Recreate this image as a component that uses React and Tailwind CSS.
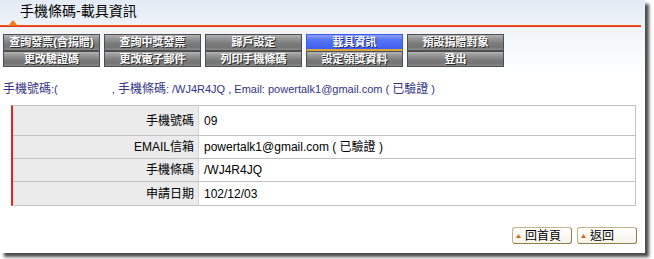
import React from 'react';

const FONT = { fontFamily: '"Liberation Sans", "Noto Sans CJK TC", sans-serif' };

// Top menu, two rows of five
const row1 = ['查詢發票(含捐贈)', '查詢中獎發票', '歸戶設定', '載具資訊', '預設捐贈對象'];
const row2 = ['更改驗證碼', '更改電子郵件', '列印手機條碼', '設定領獎資料', '登出'];

function MenuButton({ label, active, tall }) {
  if (active) {
    return (
      <div
        className={`${tall ? 'h-[17px]' : 'h-[16px]'} flex items-center justify-center border border-[#3d5ce8] border-b-[2px] border-b-[#d9a441] bg-[linear-gradient(to_bottom,#8ea2fb_0%,#5674f5_35%,#3f5ff0_100%)] text-white text-[11px] font-bold leading-none [text-shadow:1px_1px_0_#1a2a8a]`}
      >
        {label}
      </div>
    );
  }
  return (
    <div
      className={`${tall ? 'h-[17px]' : 'h-[16px]'} flex items-center justify-center border border-[#4e4e4e] bg-[linear-gradient(to_bottom,#b4b4b4_0%,#9a9a9a_20%,#7c7c7c_55%,#737373_80%,#8c8c8c_100%)] text-white text-[11px] font-bold leading-none [text-shadow:1px_1px_0_#2a2a2a]`}
    >
      {label}
    </div>
  );
}

function InfoRow({ label, value, tall }) {
  return (
    <div className={`flex ${tall ? 'h-[30px]' : 'h-[23px]'} border-b border-[#c2c2c2] last:border-b-0`}>
      <div className="w-[186px] bg-[#ebebeb] border-r border-[#d4d4d4] flex items-center justify-end pr-[4px] text-black">
        {label}
      </div>
      <div className="flex-1 flex items-center pl-[5px] text-black">{value}</div>
    </div>
  );
}

function SmallButton({ label }) {
  return (
    <div className="w-[60px] h-[17px] rounded-[3px] border border-[#c2b48a] border-r-[#8f7f4f] border-b-[#8f7f4f] bg-[linear-gradient(to_bottom,#ffffff,#f6f3ea)] flex items-center pl-[3px] gap-[4px] text-[12px] leading-none text-black">
      <svg width="5" height="4" viewBox="0 0 5 4">
        <polygon points="2.5,0 5,4 0,4" fill="#d2691e" />
      </svg>
      <span>{label}</span>
    </div>
  );
}

export default function App() {
  return (
    <div className="w-[654px] h-[259px] bg-white overflow-hidden" style={FONT}>
      <div className="w-[645px] h-[253px] bg-[linear-gradient(to_bottom,#e4ebf5_0px,#f4f7fb_40px,#ffffff_75px)] shadow-[4px_4px_3px_rgba(0,0,0,0.7)] flex flex-col">
        {/* Title */}
        <div className="h-[25px] pl-[20px] pt-[2px] text-[14px] leading-[18px] text-black">
          手機條碼-載具資訊
        </div>
        <div className="relative w-[641px] h-[2px] bg-[linear-gradient(to_bottom,#f26a1b,#e2231a)]">
          <svg className="absolute left-[8px] top-[-5px]" width="10" height="6" viewBox="0 0 10 6">
            <polygon points="5,0 10,6 0,6" fill="#f47b20" />
          </svg>
        </div>

        {/* Menu */}
        <div className="mt-[7px] ml-[3px] grid grid-cols-[97px_97px_97px_97px_97px] gap-x-[4px]">
          {row1.map((l, i) => (
            <MenuButton key={l} label={l} active={i === 3} tall />
          ))}
          {row2.map((l) => (
            <MenuButton key={l} label={l} />
          ))}
        </div>

        {/* Summary line */}
        <div className="mt-[15px] ml-[3px] h-[14px] flex items-center text-[12px] leading-none text-[#343486] whitespace-pre">
          <span>手機號碼</span>
          <span className="text-[11px]">:(</span>
          <span className="w-[54px]" />
          <span className="text-[11px]">, </span>
          <span>手機條碼</span>
          <span className="text-[11px]">: /WJ4R4JQ , Email: powertalk1@gmail.com ( </span>
          <span>已驗證</span>
          <span className="text-[11px]"> )</span>
        </div>

        {/* Detail table */}
        <div className="mt-[9px] ml-[11px] w-[625px] border border-[#c4c4c4] border-l-[2px] border-l-[#e3241b] text-[12px] leading-none">
          <InfoRow label="手機號碼" value="09" tall />
          <InfoRow label="EMAIL信箱" value="powertalk1@gmail.com ( 已驗證 )" />
          <InfoRow label="手機條碼" value="/WJ4R4JQ" />
          <InfoRow label="申請日期" value="102/12/03" />
        </div>

        {/* Bottom buttons */}
        <div className="mt-[21px] w-[637px] flex justify-end gap-[5px]">
          <SmallButton label="回首頁" />
          <SmallButton label="返回" />
        </div>
      </div>
    </div>
  );
}
